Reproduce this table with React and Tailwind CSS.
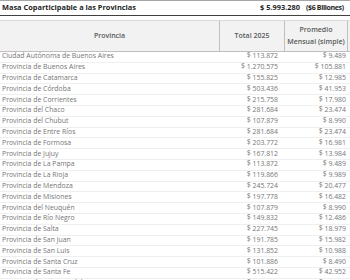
const rows = [
  ['Ciudad Autónoma de Buenos Aires', '$ 113.872', '$ 9.489'],
  ['Provincia de Buenos Aires', '$ 1.270.575', '$ 105.881'],
  ['Provincia de Catamarca', '$ 155.825', '$ 12.985'],
  ['Provincia de Córdoba', '$ 503.436', '$ 41.953'],
  ['Provincia de Corrientes', '$ 215.758', '$ 17.980'],
  ['Provincia del Chaco', '$ 281.684', '$ 23.474'],
  ['Provincia del Chubut', '$ 107.879', '$ 8.990'],
  ['Provincia de Entre Ríos', '$ 281.684', '$ 23.474'],
  ['Provincia de Formosa', '$ 203.772', '$ 16.981'],
  ['Provincia de Jujuy', '$ 167.812', '$ 13.984'],
  ['Provincia de La Pampa', '$ 113.872', '$ 9.489'],
  ['Provincia de La Rioja', '$ 119.866', '$ 9.989'],
  ['Provincia de Mendoza', '$ 245.724', '$ 20.477'],
  ['Provincia de Misiones', '$ 197.778', '$ 16.482'],
  ['Provincia del Neuquén', '$ 107.879', '$ 8.990'],
  ['Provincia de Río Negro', '$ 149.832', '$ 12.486'],
  ['Provincia de Salta', '$ 227.745', '$ 18.979'],
  ['Provincia de San Juan', '$ 191.785', '$ 15.982'],
  ['Provincia de San Luis', '$ 131.852', '$ 10.988'],
  ['Provincia de Santa Cruz', '$ 101.886', '$ 8.490'],
  ['Provincia de Santa Fe', '$ 515.422', '$ 42.952'],
  ['Provincia de Santiago del Estero', '$ 221.739', '$ 18.478'],
];

export default function App() {
  return (
    <div className="w-[350px] h-[280px] overflow-hidden bg-white font-['Open_Sans',sans-serif] border-t border-[#a6a6a6]">
      {/* title row */}
      <div className="flex h-[15px] items-center border-b border-[#404040] text-[7.4px] font-bold text-[#262626] whitespace-nowrap">
        <div className="pl-[2px] flex-1">Masa Coparticipable a las Provincias</div>
        <div className="pr-[6px]">$ 5.993.280</div>
        <div className="w-[44px] pr-[5px] tracking-[-0.35px] text-[7px]">($6 Billones)</div>
      </div>
      <div className="h-[5px] border-b border-[#d9d9d9]" />

      {/* header */}
      <div className="grid grid-cols-[220px_65px_63px] h-[31px] bg-[#f2f2f2] border-b border-[#bfbfbf] text-[7px] font-semibold text-[#595959] leading-[12px]">
        <div className="flex items-center justify-center border-r border-[#bfbfbf]">Provincia</div>
        <div className="flex items-center justify-center border-r border-[#bfbfbf]">Total 2025</div>
        <div className="flex flex-col items-center justify-center border-r border-[#bfbfbf]">
          <span>Promedio</span>
          <span>Mensual (simple)</span>
        </div>
      </div>

      {/* data */}
      {rows.map(([name, total, avg]) => (
        <div key={name} className="grid grid-cols-[220px_65px_63px] h-[10.8px] items-center border-b border-[#efefef] text-[6.9px] text-[#767676] leading-none">
          <div className="pl-[2px]">{name}</div>
          <div className="text-right pr-[7px]">{total}</div>
          <div className="text-right pr-[2px]">{avg}</div>
        </div>
      ))}
    </div>
  );
}
